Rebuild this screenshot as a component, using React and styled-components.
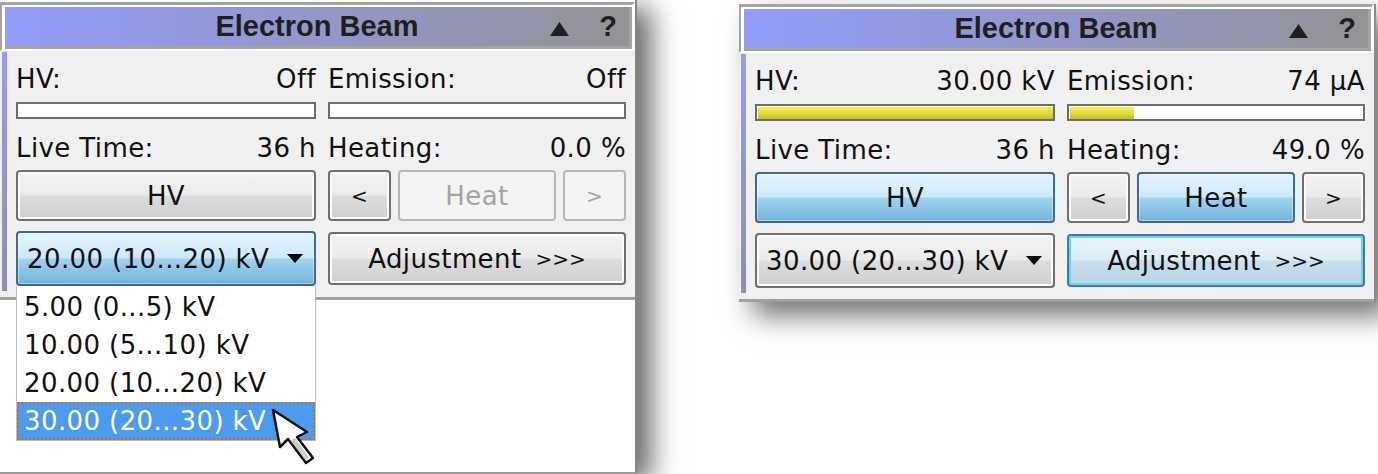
import React from "react";
import styled, { createGlobalStyle, css } from "styled-components";

const GlobalStyle = createGlobalStyle`
  body {
    margin: 0;
    background: #ffffff;
    font-family: "DejaVu Sans", sans-serif;
  }
`;

const ranges = ["5.00 (0...5) kV", "10.00 (5...10) kV", "20.00 (10...20) kV", "30.00 (20...30) kV"];

function Triangle() {
  return (
    <svg width="19" height="14" viewBox="0 0 19 14">
      <polygon points="9.5,0 19,14 0,14" fill="#1f1f1f" />
    </svg>
  );
}

function DownArrow() {
  return (
    <svg width="16" height="9" viewBox="0 0 16 9">
      <polygon points="0,0 16,0 8,9" fill="#000" />
    </svg>
  );
}

function Pointer() {
  return (
    <svg width="46" height="58" viewBox="-2 -2 46 58">
      <polygon
        points="0,0 7,37 15,29 33,53 40,48 24,27 34,22"
        fill="#fff"
        stroke="#111"
        strokeWidth="2.5"
        strokeLinejoin="round"
      />
      <polygon points="17,31 33,50 36,48 22,28" fill="#9a9a9a" opacity="0.5" />
    </svg>
  );
}

function BeamPanel({ floating, hv, emission, hvFill, emFill, heating, on, range, open }) {
  return (
    <Panel $floating={floating}>
      <TitleBar>
        <Title>Electron Beam</Title>
        <TitleTools>
          <Triangle />
          <Help>?</Help>
        </TitleTools>
      </TitleBar>
      <Body>
        <Accent />
        <Grid>
          <Readout>
            <span>HV:</span>
            <span>{hv}</span>
          </Readout>
          <Readout>
            <span>Emission:</span>
            <span>{emission}</span>
          </Readout>
          <Meter>
            <Fill style={{ width: `${hvFill}%` }} />
          </Meter>
          <Meter>
            <Fill style={{ width: `${emFill}%` }} />
          </Meter>
          <Readout $gap={13}>
            <span>Live Time:</span>
            <span>36 h</span>
          </Readout>
          <Readout $gap={13}>
            <span>Heating:</span>
            <span>{heating}</span>
          </Readout>
          <Controls>
            <Button $tone={on ? "blue" : undefined}>HV</Button>
          </Controls>
          <Controls>
            <Button $small>&lt;</Button>
            <Button $grow $tone={on ? "blue" : "off"}>Heat</Button>
            <Button $small $tone={on ? undefined : "off"}>&gt;</Button>
          </Controls>
          <BottomCell>
            <Select $tone={open ? "blue" : undefined}>
              <span>{range}</span>
              <DownArrow />
            </Select>
            {open && (
              <Menu>
                {ranges.map((r, i) => (
                  <MenuItem key={r} $active={i === 3}>{r}</MenuItem>
                ))}
              </Menu>
            )}
          </BottomCell>
          <BottomCell>
            <Button $tone={floating ? "focus" : undefined} $tall>
              Adjustment<More>&gt;&gt;&gt;</More>
            </Button>
          </BottomCell>
        </Grid>
      </Body>
    </Panel>
  );
}

export default function App() {
  return (
    <>
      <GlobalStyle />
      <Page>
        <Window>
          <BeamPanel
            hv="Off"
            emission="Off"
            hvFill={0}
            emFill={0}
            heating="0.0 %"
            range="20.00 (10...20) kV"
            open
          />
          <Cursor>
            <Pointer />
          </Cursor>
        </Window>
        <BeamPanel
          floating
          on
          hv="30.00 kV"
          emission="74 µA"
          hvFill={100}
          emFill={22}
          heating="49.0 %"
          range="30.00 (20...30) kV"
        />
      </Page>
    </>
  );
}

const Page = styled.div`
  width: 1378px;
  height: 474px;
  overflow: hidden;
  display: flex;
  align-items: flex-start;
  background: #ffffff;
`;

const Window = styled.div`
  position: relative;
  z-index: 1;
  flex: none;
  width: 635px;
  height: 470px;
  padding-top: 2px;
  background: #ffffff;
  border-right: 2px solid #858585;
  border-bottom: 2px solid #9a9a9a;
  box-shadow: 14px 8px 26px rgba(0, 0, 0, 0.6);
`;

const Cursor = styled.div`
  position: absolute;
  left: 271px;
  top: 408px;
  z-index: 10;
  line-height: 0;
`;

const Panel = styled.div`
  flex: none;
  width: 635px;
  ${(p) =>
    p.$floating &&
    css`
      margin: 4px 0 0 102px;
      border-right: 2px solid #8a8a8a;
      box-shadow: 14px 14px 26px rgba(0, 0, 0, 0.55);
    `}
`;

const TitleBar = styled.div`
  box-sizing: border-box;
  height: 49px;
  border-style: solid;
  border-width: 3px 3px 2px 2px;
  border-color: #a3a3a3 #ffffff #ffffff #a3a3a3;
  box-shadow: inset 3px 2px 0 #ffffff, inset -3px -3px 0 #a3a3a3;
  background: linear-gradient(to right, #939cf8, #9496c6 55%, #939393);
  display: grid;
  grid-template-columns: 1fr auto 1fr;
  align-items: center;
`;

const Title = styled.div`
  grid-column: 2;
  font: bold 29px "Liberation Sans", Arial, sans-serif;
  color: #1f1f1f;
  margin-top: -2px;
`;

const TitleTools = styled.div`
  grid-column: 3;
  justify-self: end;
  display: flex;
  align-items: center;
  gap: 30px;
  padding-right: 15px;
  padding-top: 3px;
`;

const Help = styled.span`
  font: bold 29px "Liberation Sans", Arial, sans-serif;
  color: #1f1f1f;
  margin-top: -4px;
`;

const Body = styled.div`
  display: flex;
  height: 246px;
  background: #f0f0f0;
  border-bottom: 3px solid #a0a0a0;
`;

const Accent = styled.div`
  flex: none;
  width: 5px;
  margin: 1px 0 6px 2px;
  background: linear-gradient(#959df7, #8e8eae);
`;

const Grid = styled.div`
  flex: 1;
  display: grid;
  grid-template-columns: 300px 298px;
  column-gap: 12px;
  align-content: start;
  padding: 12px 0 0 9px;
`;

const Readout = styled.div`
  height: 32px;
  margin-top: ${(p) => p.$gap || 0}px;
  display: flex;
  justify-content: space-between;
  align-items: center;
  font-size: 26px;
  letter-spacing: 0.4px;
  color: #111;
  white-space: nowrap;
`;

const Meter = styled.div`
  box-sizing: border-box;
  height: 17px;
  margin-top: 7px;
  border: 2px solid #6d6d6d;
  background: #ffffff;
  padding: 1px 0 0 1px;
`;

const Fill = styled.div`
  height: 100%;
  background: linear-gradient(#f5f150, #e4dc3c 50%, #c6bd28);
`;

const Controls = styled.div`
  height: 51px;
  margin-top: 6px;
  display: flex;
  gap: 7px;
`;

const BottomCell = styled.div`
  position: relative;
  height: 55px;
  margin-top: 10px;
  display: flex;
  align-items: center;
`;

const tones = {
  blue: css`
    border-color: #3c6a92;
    box-shadow: inset 0 0 0 1px rgba(255, 255, 255, 0.45);
    background: linear-gradient(#e6f4fc, #cde8f8 48%, #a2d2ee 52%, #72b2da);
  `,
  focus: css`
    border-color: #3f79a8;
    box-shadow: inset 0 0 0 2px #6fd1f7;
    background: linear-gradient(#e9f4fb, #dcecf6 48%, #cadeeb 52%, #bcd3e3);
  `,
  off: css`
    border-color: #b4b7b9;
    box-shadow: none;
    background: #f4f4f4;
    color: #a4a4a4;
  `,
};

const Button = styled.button`
  box-sizing: border-box;
  flex: ${(p) => (p.$small ? "0 0 63px" : "1")};
  height: ${(p) => (p.$tall ? "53px" : "100%")};
  display: flex;
  align-items: center;
  justify-content: center;
  padding: 0;
  font-family: "DejaVu Sans", sans-serif;
  font-size: ${(p) => (p.$small ? "20px" : "26px")};
  letter-spacing: 0.4px;
  color: #111;
  border: 2px solid #707070;
  border-radius: 4px;
  box-shadow: inset 0 0 0 2px #fbfbfb;
  background: linear-gradient(#f3f3f3, #ebebeb 48%, #dddddd 52%, #cfcfcf);
  white-space: nowrap;
  ${(p) => p.$tone && tones[p.$tone]}
`;

const More = styled.span`
  font-size: 20px;
  letter-spacing: 0;
  margin-left: 14px;
`;

const Select = styled(Button)`
  height: 55px;
  justify-content: space-between;
  padding: 0 11px 0 9px;
`;

const Menu = styled.div`
  position: absolute;
  top: 55px;
  left: 0;
  right: 0;
  z-index: 5;
  padding-top: 2px;
  background: #ffffff;
  border: 1px solid #bdbdbd;
  border-top: none;
`;

const MenuItem = styled.div`
  box-sizing: border-box;
  height: 38px;
  display: flex;
  align-items: center;
  padding-left: 7px;
  font-size: 26px;
  letter-spacing: 0.4px;
  color: #111;
  ${(p) =>
    p.$active &&
    css`
      background: #4d9bef;
      color: #ffffff;
      outline: 2px dotted #c8701e;
      outline-offset: -2px;
    `}
`;
